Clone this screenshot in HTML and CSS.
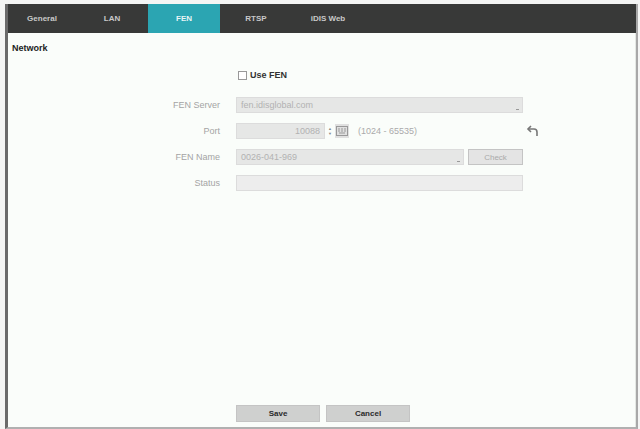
FILE: index.html
```html
<!DOCTYPE html>
<html lang="en">

<head>
    <meta charset="UTF-8">
    <meta name="viewport" content="width=device-width, initial-scale=1.0">
    <title>Network - FEN</title>
    <link rel="stylesheet" href="styles.css">
</head>

<body>
    <div id="setup">
        <ul id="tabs">
            <li class="tab">General</li>
            <li class="tab">LAN</li>
            <li class="tab active">FEN</li>
            <li class="tab">RTSP</li>
            <li class="tab">iDIS Web</li>
        </ul>
        <div id="panel">
            <div class="title">Network</div>
            <div class="form">
                <div class="label"></div>
                <label class="check"><span class="box"></span>Use FEN</label>

                <div class="label">FEN Server</div>
                <div class="field">fen.idisglobal.com<span class="drop"></span></div>

                <div class="label">Port</div>
                <div class="port">
                    <div class="field num">10088</div>
                    <div class="spin"><span>&#9650;</span><span>&#9660;</span></div>
                    <div class="keypad">
                        <svg width="12" height="10" viewBox="0 0 12 10">
                            <rect x="0.5" y="0.5" width="11" height="9" fill="none" stroke="#999" />
                            <path d="M2 3h2M5 3h2M8 3h2M2 5h2M5 5h2M8 5h2M3 7h6" stroke="#999" />
                        </svg>
                    </div>
                    <span class="range">(1024 - 65535)</span>
                    <span class="undo">
                        <svg width="14" height="14" viewBox="0 0 14 14">
                            <path d="M5 2L2 5l3 3" fill="none" stroke="#777" stroke-width="1.6" />
                            <path d="M2 5h6a3 3 0 0 1 3 3v4" fill="none" stroke="#777" stroke-width="1.6" />
                        </svg>
                    </span>
                </div>

                <div class="label">FEN Name</div>
                <div class="name">
                    <div class="field">0026-041-969<span class="drop"></span></div>
                    <div class="btn small">Check</div>
                </div>

                <div class="label">Status</div>
                <div class="field status"></div>
            </div>
            <div class="buttons">
                <div class="btn">Save</div>
                <div class="btn">Cancel</div>
            </div>
        </div>
    </div>
</body>

</html>
```

FILE: styles.css
```css
* {
    margin: 0;
    padding: 0;
    list-style: none;
    box-sizing: border-box;
}

body {
    background: #f4f5f4;
    font-family: "Liberation Sans", Arial, sans-serif;
    font-size: 9px;
    padding: 4px 2px 0 5px;
}

#setup {
    height: 425px;
    border-left: 3px solid #6a6a6a;
    border-right: 2px solid #a8a8a8;
    border-bottom: 2px solid #b0b0b0;
    display: flex;
    flex-direction: column;
}

#tabs {
    height: 29px;
    background: #383938;
    display: flex;
}

.tab {
    width: 72px;
    color: #c9c9c9;
    font-weight: bold;
    font-size: 8px;
    line-height: 29px;
    text-align: center;
}

.tab:first-child {
    width: 68px;
}

.tab.active {
    background: #2ba5b2;
    color: #e8f4f5;
}

#panel {
    flex: 1;
    background: #fafdfa;
    border-right: 1px solid #e4e8e4;
    display: flex;
    flex-direction: column;
    padding: 0 0 5px 4px;
}

.title {
    font-weight: bold;
    color: #222;
    margin-top: 10px;
    height: 14px;
}

.form {
    display: grid;
    grid-template-columns: 208px 287px;
    grid-auto-rows: 16px;
    row-gap: 10px;
    column-gap: 16px;
    margin-top: 14px;
    align-items: center;
}

.label {
    text-align: right;
    color: #a4a4a4;
}

.check {
    display: flex;
    align-items: center;
    gap: 3px;
    font-weight: bold;
    color: #333;
    margin-bottom: 8px;
    margin-left: 2px;
}

.box {
    width: 9px;
    height: 9px;
    border: 1px solid #999;
    background: #fff;
}

.field {
    height: 16px;
    background: #e6e7e6;
    border: 1px solid #dcdcdc;
    color: #b2b2b2;
    line-height: 14px;
    padding: 0 4px;
    position: relative;
}

.drop {
    position: absolute;
    right: 3px;
    bottom: 2px;
    width: 3px;
    height: 1px;
    background: #999;
}

.port {
    display: flex;
    align-items: center;
    height: 16px;
}

.num {
    width: 89px;
    text-align: right;
}

.spin {
    display: flex;
    flex-direction: column;
    font-size: 4px;
    line-height: 5px;
    color: #888;
    margin: 0 3px;
}

.keypad {
    display: flex;
    align-items: center;
    justify-content: center;
    width: 14px;
    height: 14px;
    background: #e0e0e0;
}

.range {
    color: #aaa;
    margin-left: 9px;
}

.undo {
    margin-left: auto;
    margin-right: -17px;
    display: flex;
}

.name {
    display: flex;
    gap: 4px;
}

.name .field {
    flex: 1;
}

.status {
    background: #ededed;
}

.btn {
    width: 84px;
    height: 17px;
    background: #cfd0cf;
    border: 1px solid #c4c4c4;
    color: #2a2a2a;
    font-weight: bold;
    font-size: 8px;
    line-height: 15px;
    text-align: center;
}

.btn.small {
    width: 55px;
    height: 16px;
    background: #e4e4e4;
    color: #aaa;
    font-weight: normal;
}

.buttons {
    margin-top: auto;
    display: flex;
    gap: 6px;
    margin-left: 224px;
}
```
